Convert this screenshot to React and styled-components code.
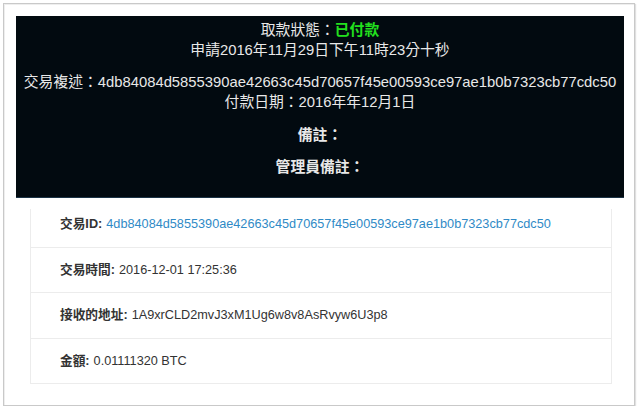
import React from "react";
import styled, { createGlobalStyle } from "styled-components";

const Global = createGlobalStyle`
  html, body { margin: 0; padding: 0; background: #ffffff; }
  body { font-family: "Liberation Sans", "Noto Sans CJK TC", sans-serif; }
  * { box-sizing: border-box; }
`;

const Frame = styled.div`
  margin: 3px 0 0 3px;
  width: 632px;
  height: 403px;
  border: 1px solid #c9c9c9;
  box-shadow: 1px 1px 1px rgba(0,0,0,0.12), inset 1px 1px 0 #eeeeee;
  background: #fff;
  padding: 12px 10px 0 12px;
`;

const Dark = styled.div`
  background: #020a10;
  border-bottom: 1px solid #1b3346;
  height: 182px;
  padding: 4px 0 0;
  display: flex;
  flex-direction: column;
  gap: 12.4px;
  color: #e8e8e8;
  font-size: 14.8px;
  text-align: center;
`;

const Para = styled.div`
  line-height: 20px;
  font-weight: ${p => (p.$bold ? 700 : 400)};
  white-space: nowrap;
`;

const Paid = styled.span`
  color: #22e01e;
  font-weight: 700;
`;

const Table = styled.div`
  margin: 11px 12px 0 14px;
  border: 1px solid #ececec;
  border-top: none;
  font-size: 12.7px;
  color: #333;
`;

const Row = styled.div`
  display: flex;
  align-items: center;
  line-height: 18px;
  padding: ${p => (p.$first ? "6px 0 14px 29px" : "13.15px 0 13.15px 29px")};
  border-top: ${p => (p.$first ? "none" : "1px solid #ececec")};
  white-space: nowrap;
`;

const Label = styled.b`
  font-weight: 700;
  margin-right: 4px;
`;

const Link = styled.a`
  color: #2f8ac6;
  text-decoration: none;
`;

const hash = "4db84084d5855390ae42663c45d70657f45e00593ce97ae1b0b7323cb77cdc50";

export default function App() {
  return (
    <>
      <Global />
      <Frame>
        <Dark>
          <Para>
            取款狀態：<Paid>已付款</Paid>
            <br />
            申請2016年11月29日下午11時23分十秒
          </Para>
          <Para>
            交易複述：{hash}
            <br />
            付款日期：2016年年12月1日
          </Para>
          <Para $bold>備註：</Para>
          <Para $bold>管理員備註：</Para>
        </Dark>
        <Table>
          <Row $first>
            <Label>交易ID:</Label>
            <Link href="#">{hash}</Link>
          </Row>
          <Row>
            <Label>交易時間:</Label>2016-12-01 17:25:36
          </Row>
          <Row>
            <Label>接收的地址:</Label>1A9xrCLD2mvJ3xM1Ug6w8v8AsRvyw6U3p8
          </Row>
          <Row>
            <Label>金額:</Label>0.01111320 BTC
          </Row>
        </Table>
      </Frame>
    </>
  );
}
